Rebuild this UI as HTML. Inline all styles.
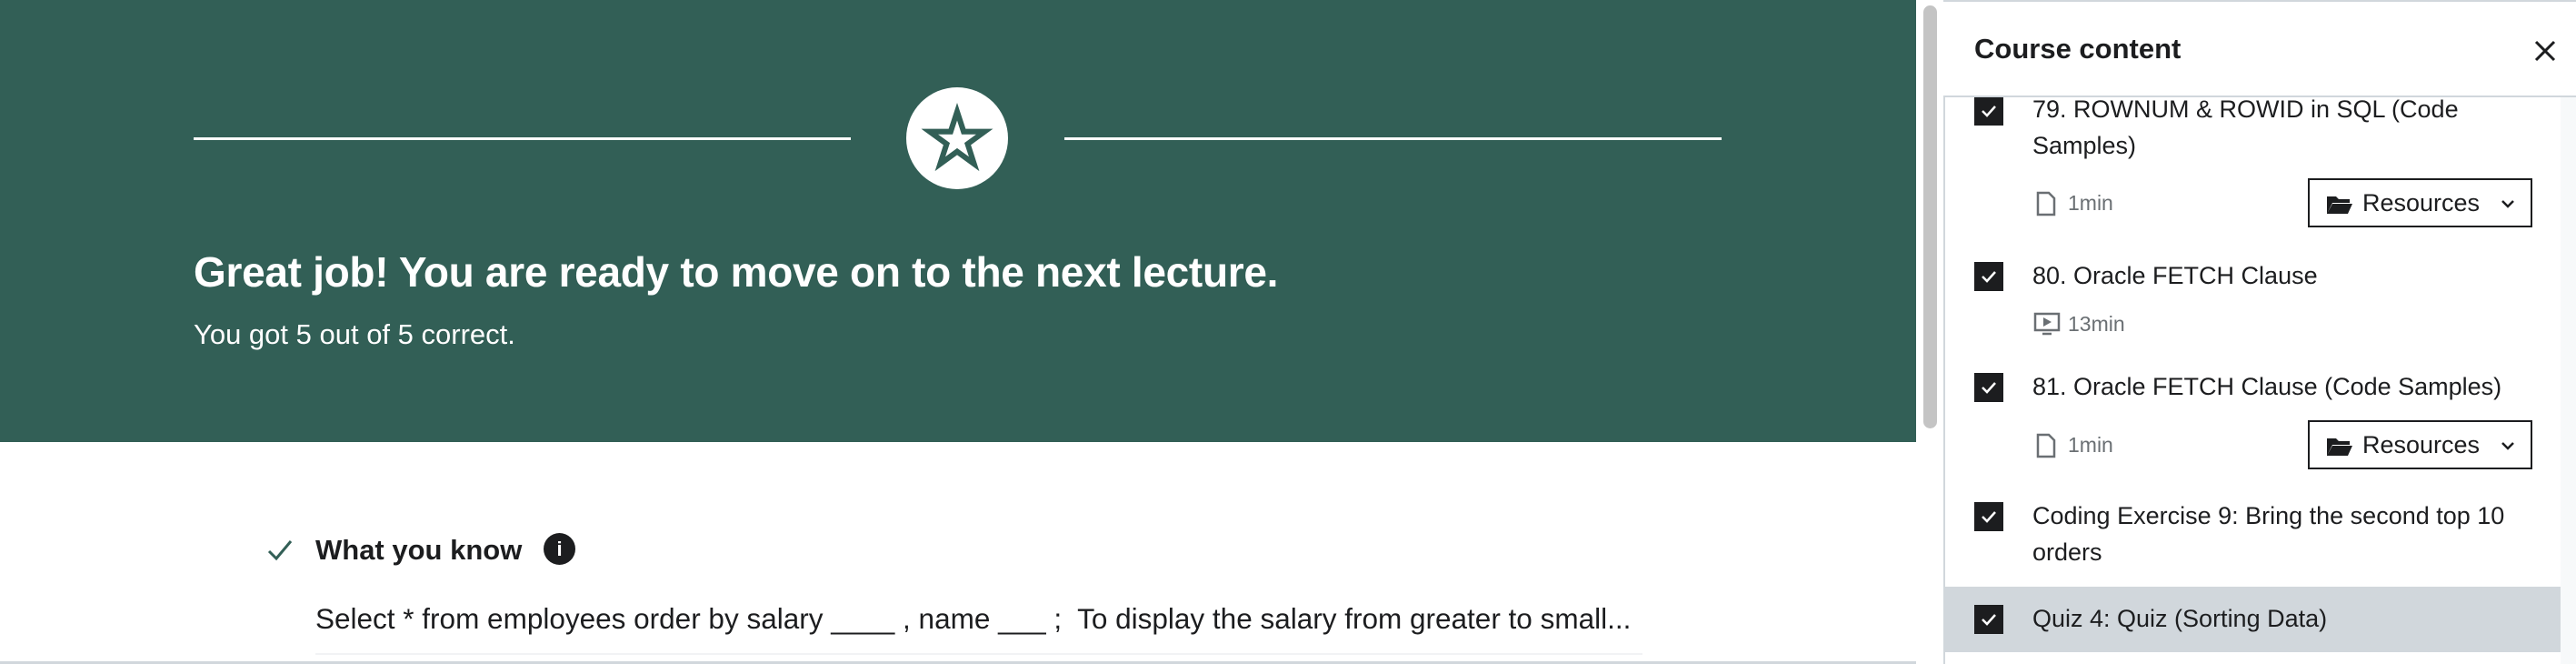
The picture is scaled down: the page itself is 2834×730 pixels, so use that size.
<!DOCTYPE html>
<html><head><meta charset="utf-8"><style>
*{box-sizing:border-box;margin:0;padding:0}
body{width:2834px;height:730px;overflow:hidden;background:#fff;font-family:"Liberation Sans",sans-serif;color:#1c1d1f;position:relative}
.banner{position:absolute;left:0;top:0;width:2108px;height:486px;background:#325f56}
.line{position:absolute;top:151px;height:3px;background:#fff}
.circle{position:absolute;left:997px;top:96px;width:112px;height:112px;border-radius:50%;background:#fff}
.h1{position:absolute;left:213px;top:272px;color:#fff;font-weight:bold;font-size:46px;letter-spacing:-0.3px}
.sub{position:absolute;left:213px;top:350px;color:#fff;font-size:31px}
.wyk{position:absolute;left:347px;top:587px;font-weight:bold;font-size:31px}
.sel{position:absolute;left:347px;top:662px;font-size:31.5px;white-space:nowrap}
.sb{position:absolute;left:2116px;top:6px;width:15px;height:465px;border-radius:8px;background:#c4c4c4}
.side{position:absolute;left:2138px;top:0;width:696px;height:730px;border-left:2px solid #d1d7dc;background:#fff}
.hdr{position:absolute;left:2138px;top:0;width:696px;height:107px;border-bottom:2px solid #d1d7dc;border-top:2px solid #d1d7dc;background:#fff;z-index:2}
.hdr span{position:absolute;left:34px;top:34px;font-weight:bold;font-size:31px}
.cb{position:absolute;left:2172px;width:32px;height:32px;background:#1c1d1f}
.cb svg{position:absolute;left:6px;top:6px}
.t{position:absolute;left:2236px;font-size:27px;line-height:40px;color:#1c1d1f}
.m{position:absolute;left:2275px;font-size:23px;color:#6a6f73}
.res{position:absolute;left:2539px;width:247px;height:54px;border:2px solid #1c1d1f;font-size:27px;line-height:50px;padding-left:58px}
</style></head><body>
<div class="banner">
<div class="line" style="left:213px;width:723px"></div>
<div class="line" style="left:1171px;width:723px"></div>
<div class="circle"><svg width="112" height="112" viewBox="0 0 112 112"><path d="M56 17 L65.35 45.64 L95.47 45.68 L71.12 63.41 L80.39 92.07 L56 74.4 L31.61 92.07 L40.88 63.41 L16.53 45.68 L46.65 45.64 Z M56 36.5 L51.06 51.7 L35.08 51.7 L48.01 61.1 L43.07 76.3 L56 66.9 L68.93 76.3 L63.99 61.1 L76.92 51.7 L60.94 51.7 Z" fill="#325f56" fill-rule="evenodd"/></svg></div>
<div class="h1">Great job! You are ready to move on to the next lecture.</div>
<div class="sub">You got 5 out of 5 correct.</div>
</div>
<svg style="position:absolute;left:293px;top:590px" width="30" height="30" viewBox="0 0 30 30"><path d="M3 16 L11 24 L27 5" stroke="#325f56" stroke-width="3" fill="none"/></svg>
<div class="wyk">What you know</div>
<div style="position:absolute;left:598px;top:586px;width:35px;height:35px;border-radius:50%;background:#1c1d1f;color:#fff;font-weight:bold;font-size:22px;text-align:center;line-height:35px">i</div>
<div class="sel">Select * from employees order by salary ____ , name ___ ;&nbsp; To display the salary from greater to small...</div>
<div style="position:absolute;left:347px;top:718px;width:1460px;height:2px;background:#f2f3f5"></div>
<div style="position:absolute;left:0;top:727px;width:2108px;height:3px;background:#d1d7dc"></div>
<div class="sb"></div>
<div class="side"></div>
<div style="position:absolute;left:2817px;top:107px;width:17px;height:623px;background:#f7f9fa"></div>
<div class="hdr"><span>Course content</span>
<svg style="position:absolute;left:650px;top:42px" width="24" height="24" viewBox="0 0 24 24"><path d="M2 2 L22 22 M22 2 L2 22" stroke="#1c1d1f" stroke-width="3"/></svg></div>

<div class="cb" style="top:106px"><svg width="20" height="20" viewBox="0 0 20 20"><path d="M3 10 L8 15 L17 5" stroke="#fff" stroke-width="2.5" fill="none"/></svg></div>
<div class="t" style="top:100px">79. ROWNUM &amp; ROWID in SQL (Code<br>Samples)</div>
<svg style="position:absolute;left:2240px;top:210px" width="22" height="28" viewBox="0 0 22 28"><path d="M2 2 H14 L20 8 V26 H2 Z" stroke="#6a6f73" stroke-width="2.5" fill="none"/></svg>
<div class="m" style="top:210px">1min</div>
<div class="res" style="top:196px">Resources<svg style="position:absolute;left:18px;top:15px" width="30" height="24" viewBox="0 0 30 24"><path d="M1 3 H11 L14 6 H26 V10 H7 L1 22 Z M7 11 H29 L24 22 H1 Z" fill="#1c1d1f"/></svg><svg style="position:absolute;left:210px;top:20px" width="16" height="12" viewBox="0 0 16 12"><path d="M2 3 L8 9 L14 3" stroke="#1c1d1f" stroke-width="2.5" fill="none"/></svg></div>

<div class="cb" style="top:288px"><svg width="20" height="20" viewBox="0 0 20 20"><path d="M3 10 L8 15 L17 5" stroke="#fff" stroke-width="2.5" fill="none"/></svg></div>
<div class="t" style="top:283px">80. Oracle FETCH Clause</div>
<svg style="position:absolute;left:2237px;top:343px" width="30" height="26" viewBox="0 0 30 26"><path d="M2 2 H28 V20 H2 Z" stroke="#6a6f73" stroke-width="2.5" fill="none"/><path d="M11 6 L20 11 L11 16 Z" fill="#6a6f73"/><path d="M10 24 H20" stroke="#6a6f73" stroke-width="2.5"/></svg>
<div class="m" style="top:343px">13min</div>

<div class="cb" style="top:410px"><svg width="20" height="20" viewBox="0 0 20 20"><path d="M3 10 L8 15 L17 5" stroke="#fff" stroke-width="2.5" fill="none"/></svg></div>
<div class="t" style="top:405px">81. Oracle FETCH Clause (Code Samples)</div>
<svg style="position:absolute;left:2240px;top:476px" width="22" height="28" viewBox="0 0 22 28"><path d="M2 2 H14 L20 8 V26 H2 Z" stroke="#6a6f73" stroke-width="2.5" fill="none"/></svg>
<div class="m" style="top:476px">1min</div>
<div class="res" style="top:462px">Resources<svg style="position:absolute;left:18px;top:15px" width="30" height="24" viewBox="0 0 30 24"><path d="M1 3 H11 L14 6 H26 V10 H7 L1 22 Z M7 11 H29 L24 22 H1 Z" fill="#1c1d1f"/></svg><svg style="position:absolute;left:210px;top:20px" width="16" height="12" viewBox="0 0 16 12"><path d="M2 3 L8 9 L14 3" stroke="#1c1d1f" stroke-width="2.5" fill="none"/></svg></div>

<div class="cb" style="top:552px"><svg width="20" height="20" viewBox="0 0 20 20"><path d="M3 10 L8 15 L17 5" stroke="#fff" stroke-width="2.5" fill="none"/></svg></div>
<div class="t" style="top:547px">Coding Exercise 9: Bring the second top 10<br>orders</div>

<div style="position:absolute;left:2140px;top:645px;width:677px;height:72px;background:#d1d7dc"></div>
<div class="cb" style="top:665px"><svg width="20" height="20" viewBox="0 0 20 20"><path d="M3 10 L8 15 L17 5" stroke="#fff" stroke-width="2.5" fill="none"/></svg></div>
<div class="t" style="top:660px">Quiz 4: Quiz (Sorting Data)</div>
</body></html>
